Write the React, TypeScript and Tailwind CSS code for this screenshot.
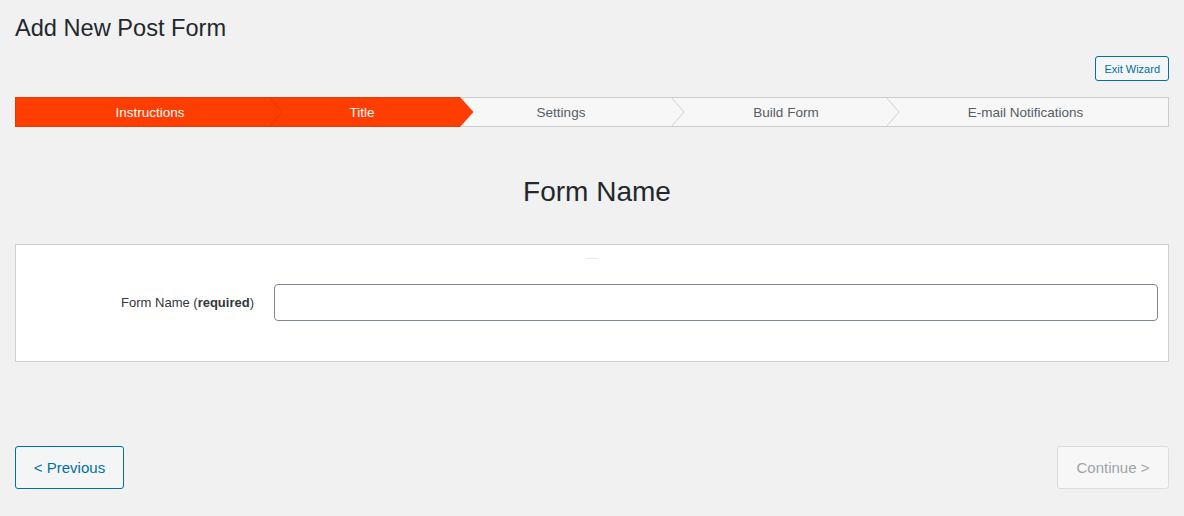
import React from 'react';

type Step = {
    label: string;
    width: string;
    pad: string;
    active: boolean;
};

const steps: Step[] = [
    { label: 'Instructions', width: 'w-[255px]', pad: 'pl-[14px]', active: true },
    { label: 'Title', width: 'w-[190px]', pad: 'pr-[6px]', active: true },
    { label: 'Settings', width: 'w-[212px]', pad: 'pr-[10px]', active: false },
    { label: 'Build Form', width: 'w-[215px]', pad: 'pl-[13px]', active: false },
    { label: 'E-mail Notifications', width: 'flex-1', pad: 'pr-[4px]', active: false },
];

const ORANGE = '#fe3d00';

const Chevron: React.FC<{ active: boolean; nextActive: boolean }> = ({ active, nextActive }) => {
    if (active && !nextActive) {
        return (
            <svg className="absolute left-full top-[-1px] z-10" width="14" height="30" viewBox="0 0 14 30">
                <polygon points="0,0 13.5,15 0,30" fill={ORANGE} />
            </svg>
        );
    }
    return (
        <svg className="absolute left-full top-[-1px] z-10 -ml-[1px]" width="14" height="30" viewBox="0 0 14 30">
            <polyline
                points="0.5,0.5 13,15 0.5,29.5"
                fill="none"
                stroke={active ? '#e23700' : '#d4d4d4'}
                strokeWidth="1"
            />
        </svg>
    );
};

const StepsBar: React.FC = () => (
    <div className="flex h-[30px]">
        {steps.map((s, i) => {
            const next = steps[i + 1];
            return (
                <div
                    key={s.label}
                    className={`relative flex items-center justify-center border-y pt-[2px] text-[13.5px] ${s.width} ${s.pad} ${
                        s.active
                            ? 'bg-[#fe3d00] border-[#e23a00] text-white'
                            : 'bg-[#f7f7f7] border-[#cccccc] text-[#555d66]'
                    } ${i === 0 ? 'border-l' : ''} ${i === steps.length - 1 ? 'border-r' : ''}`}
                >
                    {s.label}
                    {next && <Chevron active={s.active} nextActive={next.active} />}
                </div>
            );
        })}
    </div>
);

export default function App() {
    return (
        <div
            className="min-h-[516px] bg-[#f1f1f1] px-[15px] text-[#23282d]"
            style={{ fontFamily: '"Liberation Sans", Arial, sans-serif' }}
        >
            <h1 className="pt-[13px] text-[23.6px] leading-[30px] font-normal">Add New Post Form</h1>

            <div className="mt-[13px] flex justify-end">
                <button className="h-[25px] rounded-[3px] border border-[#0071a1] bg-[#f3f5f6] px-[8px] pt-px text-[11px] text-[#0071a1]">
                    Exit Wizard
                </button>
            </div>

            <div className="mt-[16px]">
                <StepsBar />
            </div>

            <h2 className="mt-[47px] pl-[10px] text-center text-[28px] leading-[36px] font-normal">Form Name</h2>

            <div className="mt-[34px] flex h-[118px] flex-col border border-[#ccd0d4] bg-white">
                <div className="mx-auto mt-[13px] h-px w-[10px] bg-[#e5e5e5]" />
                <div className="mt-[25px] flex items-center">
                    <label className="w-[238px] text-right text-[13px] text-[#32373c]">
                        Form Name (<strong className="font-bold">required</strong>)
                    </label>
                    <input
                        type="text"
                        className="ml-[20px] mr-[10px] h-[37px] flex-1 rounded-[4px] border border-[#7e8993] bg-white px-2 text-[14px] outline-none"
                    />
                </div>
            </div>

            <div className="mt-[84px] flex justify-between">
                <button className="h-[43px] w-[109px] rounded-[3px] border border-[#0071a1] bg-[#f3f5f6] pt-[2px] text-[15px] text-[#0071a1]">
                    &lt; Previous
                </button>
                <button
                    disabled
                    className="h-[43px] w-[112px] rounded-[3px] border border-[#dddddd] bg-[#f7f7f7] pt-[2px] text-[15px] text-[#a0a5aa]"
                >
                    Continue &gt;
                </button>
            </div>
        </div>
    );
}
